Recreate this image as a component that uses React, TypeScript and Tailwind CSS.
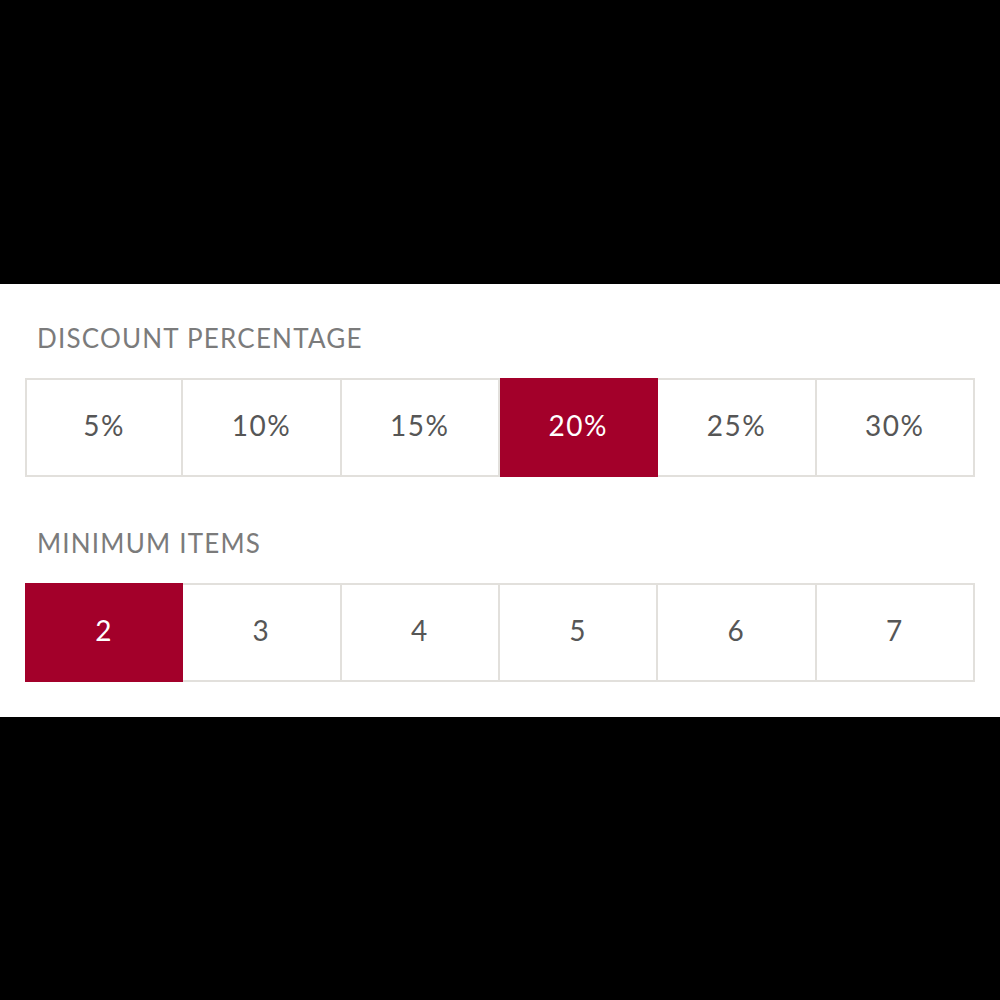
import React, { useState } from "react";

const discounts = ["5%", "10%", "15%", "20%", "25%", "30%"];
const minItems = ["2", "3", "4", "5", "6", "7"];

type SegmentProps = {
  options: string[];
  value: string;
  onChange: (v: string) => void;
};

const Segments: React.FC<SegmentProps> = ({ options, value, onChange }) => {
  return (
    <div className="grid grid-cols-6 h-[99px]">
      {options.map((opt, i) => {
        const active = opt === value;
        return (
          <button
            key={opt}
            type="button"
            onClick={() => onChange(opt)}
            className={
              "flex items-center justify-center pb-[4px] text-[28px] tracking-[1.5px] border-y-2 border-r-2 " +
              (i === 0 ? "border-l-2 " : "") +
              (active
                ? "bg-[#a3002a] border-[#a3002a] text-white"
                : "bg-white border-[#e2e0dc] text-[#565656]")
            }
          >
            {opt}
          </button>
        );
      })}
    </div>
  );
};

export default function App() {
  const [discount, setDiscount] = useState("20%");
  const [items, setItems] = useState("2");

  return (
    <div
      className="min-h-screen bg-black flex flex-col justify-center"
      style={{ fontFamily: "Lato, 'Open Sans', sans-serif" }}
    >
      <div className="bg-white px-[25px] pt-[38px] pb-[35px]">
        {/* Discount picker */}
        <div className="pl-3 text-[26px] leading-[32px] text-[#7b7b7b] tracking-[1.2px]">
          DISCOUNT PERCENTAGE
        </div>
        <div className="mt-6">
          <Segments options={discounts} value={discount} onChange={setDiscount} />
        </div>

        {/* Minimum items picker */}
        <div className="mt-[50px] pl-3 text-[26px] leading-[32px] text-[#7b7b7b] tracking-[1.2px]">
          MINIMUM ITEMS
        </div>
        <div className="mt-6">
          <Segments options={minItems} value={items} onChange={setItems} />
        </div>
      </div>
    </div>
  );
}
